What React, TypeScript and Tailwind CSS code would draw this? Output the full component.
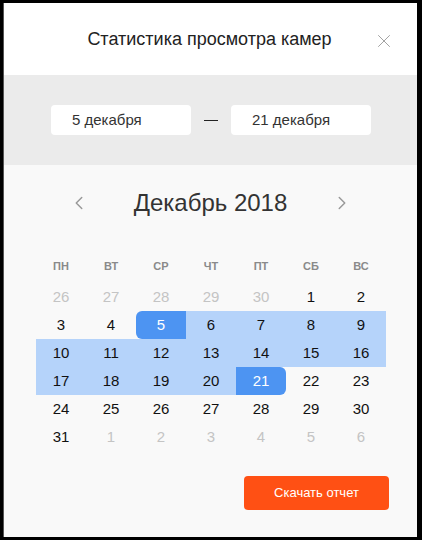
import { ChevronLeft, ChevronRight, X } from "lucide-react";

const weekDays = ["пн", "вт", "ср", "чт", "пт", "сб", "вс"];

type Day = { n: number; muted?: boolean };

const weeks: Day[][] = [
  [{ n: 26, muted: true }, { n: 27, muted: true }, { n: 28, muted: true }, { n: 29, muted: true }, { n: 30, muted: true }, { n: 1 }, { n: 2 }],
  [3, 4, 5, 6, 7, 8, 9].map((n) => ({ n })),
  [10, 11, 12, 13, 14, 15, 16].map((n) => ({ n })),
  [17, 18, 19, 20, 21, 22, 23].map((n) => ({ n })),
  [24, 25, 26, 27, 28, 29, 30].map((n) => ({ n })),
  [{ n: 31 }, { n: 1, muted: true }, { n: 2, muted: true }, { n: 3, muted: true }, { n: 4, muted: true }, { n: 5, muted: true }, { n: 6, muted: true }],
];

const START = 5;
const END = 21;

function cellClass(d: Day) {
  if (d.muted) return "text-[#c4c4c4]";
  if (d.n === START) return "bg-[#4d94f2] text-white rounded-l-md";
  if (d.n === END) return "bg-[#4d94f2] text-white rounded-r-md";
  if (d.n > START && d.n < END) return "bg-[#b5d3fa] text-[#111]";
  return "text-[#111]";
}

export default function App() {
  return (
    <div
      className="w-[422px] h-[540px] bg-black p-[3px] pr-[5px]"
      style={{ fontFamily: '"Liberation Sans", Arial, sans-serif' }}
    >
      <div className="h-full flex flex-col bg-[#f9f9f9] border-l border-[#555]">
        {/* шапка */}
        <div className="h-[72px] bg-white flex items-center relative">
          <div className="w-full text-center text-[18px] text-[#222] pl-[2px] pr-[4px]">
            Статистика просмотра камер
          </div>
          <X className="absolute right-[22px] top-[27px] w-[22px] h-[22px] text-[#999]" strokeWidth={1} />
        </div>

        {/* даты */}
        <div className="h-[90px] bg-[#ebebeb] flex items-center justify-center gap-[13px] pl-[1px]">
          <div className="w-[140px] h-[30px] bg-white rounded-sm flex items-center pl-[21px] text-[15px] text-[#333]">
            5 декабря
          </div>
          <div className="w-[14px] h-px bg-[#222]"></div>
          <div className="w-[140px] h-[30px] bg-white rounded-sm flex items-center pl-[21px] text-[15px] text-[#333]">
            21 декабря
          </div>
        </div>

        {/* календарь */}
        <div className="flex-1 flex flex-col">
          <div className="flex items-center justify-between pl-[64px] pr-[64px] mt-[24px] h-[28px]">
            <ChevronLeft className="w-[22px] h-[22px] text-[#999]" strokeWidth={1.6} />
            <div className="text-[24px] text-[#333]">Декабрь 2018</div>
            <ChevronRight className="w-[22px] h-[22px] text-[#999]" strokeWidth={1.6} />
          </div>

          <div className="ml-[32px] w-[350px] mt-[39px]">
            <div className="grid grid-cols-7 h-[20px] items-center">
              {weekDays.map((w) => (
                <div key={w} className="text-center text-[11px] font-bold uppercase text-[#8a8a8a]">
                  {w}
                </div>
              ))}
            </div>
            <div className="mt-[7px]">
              {weeks.map((week, i) => (
                <div key={i} className="grid grid-cols-7">
                  {week.map((d, j) => (
                    <div
                      key={j}
                      className={`h-[28px] flex items-center justify-center text-[15px] ${cellClass(d)}`}
                    >
                      {d.n}
                    </div>
                  ))}
                </div>
              ))}
            </div>
          </div>

          <div className="flex justify-end pr-[28px] mt-[25px]">
            <button className="w-[145px] h-[34px] bg-[#ff5014] text-white text-[13px] rounded-[4px]">
              Скачать отчет
            </button>
          </div>
        </div>
      </div>
    </div>
  );
}
